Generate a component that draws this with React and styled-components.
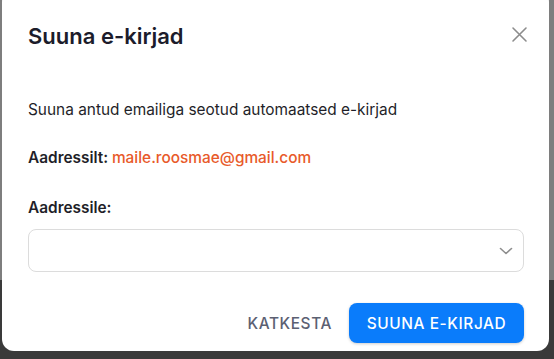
import React from 'react';
import styled, { createGlobalStyle } from 'styled-components';

const GlobalStyle = createGlobalStyle`
  html, body {
    margin: 0;
    padding: 0;
    height: 100%;
    overflow: hidden;
  }
  body {
    background: linear-gradient(#7e7e7e 0 280px, #3a3a3a 280px);
    font-family: Inter, "Noto Sans", sans-serif;
  }
`;

const Backdrop = styled.div`
  padding: 0 5px 0 2px;
`;

const Dialog = styled.div`
  margin-top: -10px;
  height: 361px;
  box-sizing: border-box;
  background: #fff;
  border-radius: 12px;
  padding: 31px 25px 0 26px;
  display: flex;
  flex-direction: column;
`;

const Header = styled.div`
  display: flex;
  align-items: center;
  justify-content: space-between;
  height: 30px;
`;

const Title = styled.h2`
  margin: 0;
  font-size: 22px;
  line-height: 30px;
  font-weight: 600;
  color: #1c1c2b;
`;

const CloseButton = styled.button`
  border: 0;
  background: none;
  padding: 0;
  width: 17px;
  height: 17px;
  margin: -3px -4px 0 0;
  color: #8c8c8c;
  display: flex;
  cursor: pointer;
`;

const Text = styled.p`
  margin: ${(p) => p.$top}px 0 0;
  font-size: 15.4px;
  line-height: 20px;
  color: #1f1f29;
  font-weight: ${(p) => (p.$bold ? 600 : 400)};
`;

const Email = styled.span`
  color: #e85a2a;
  font-weight: 500;
`;

const Select = styled.div`
  margin-top: 11px;
  height: 43px;
  box-sizing: border-box;
  border: 1px solid #dcdcdc;
  border-radius: 8px;
  display: flex;
  align-items: center;
  justify-content: flex-end;
  padding-right: 10px;
  color: #8e8e8e;
`;

const Footer = styled.div`
  margin-top: 31px;
  display: flex;
  justify-content: flex-end;
  align-items: center;
  gap: 17px;
`;

const Button = styled.button`
  font-family: Inter, "Noto Sans", sans-serif;
  font-size: 15.4px;
  font-weight: 500;
  letter-spacing: 0.6px;
  height: 40px;
  border-radius: 8px;
  border: 0;
  cursor: pointer;
  padding: 0;
  background: ${(p) => (p.$primary ? '#0a7cfb' : 'transparent')};
  color: ${(p) => (p.$primary ? '#fff' : '#5b6072')};
  box-shadow: ${(p) => (p.$primary ? '0 1px 3px rgba(0,0,0,0.2)' : 'none')};
  width: ${(p) => (p.$primary ? '175px' : 'auto')};
`;

export default function App() {
  return (
    <>
      <GlobalStyle />
      <Backdrop>
        <Dialog>
          <Header>
            <Title>Suuna e-kirjad</Title>
            <CloseButton aria-label="Sulge">
              <svg width="17" height="17" viewBox="0 0 17 17" fill="none" stroke="currentColor" strokeWidth="1.6" strokeLinecap="round">
                <path d="M2 2l13 13M15 2L2 15" />
              </svg>
            </CloseButton>
          </Header>
          <Text $top={49}>Suuna antud emailiga seotud automaatsed e-kirjad</Text>
          <Text $top={28} $bold>
            Aadressilt: <Email>maile.roosmae@gmail.com</Email>
          </Text>
          <Text $top={30} $bold>Aadressile:</Text>
          <Select>
            <svg width="14" height="8" viewBox="0 0 14 8" fill="none" stroke="currentColor" strokeWidth="1.6" strokeLinecap="round" strokeLinejoin="round">
              <path d="M1.5 1.5L7 6.5l5.5-5" />
            </svg>
          </Select>
          <Footer>
            <Button>KATKESTA</Button>
            <Button $primary>SUUNA E-KIRJAD</Button>
          </Footer>
        </Dialog>
      </Backdrop>
    </>
  );
}
